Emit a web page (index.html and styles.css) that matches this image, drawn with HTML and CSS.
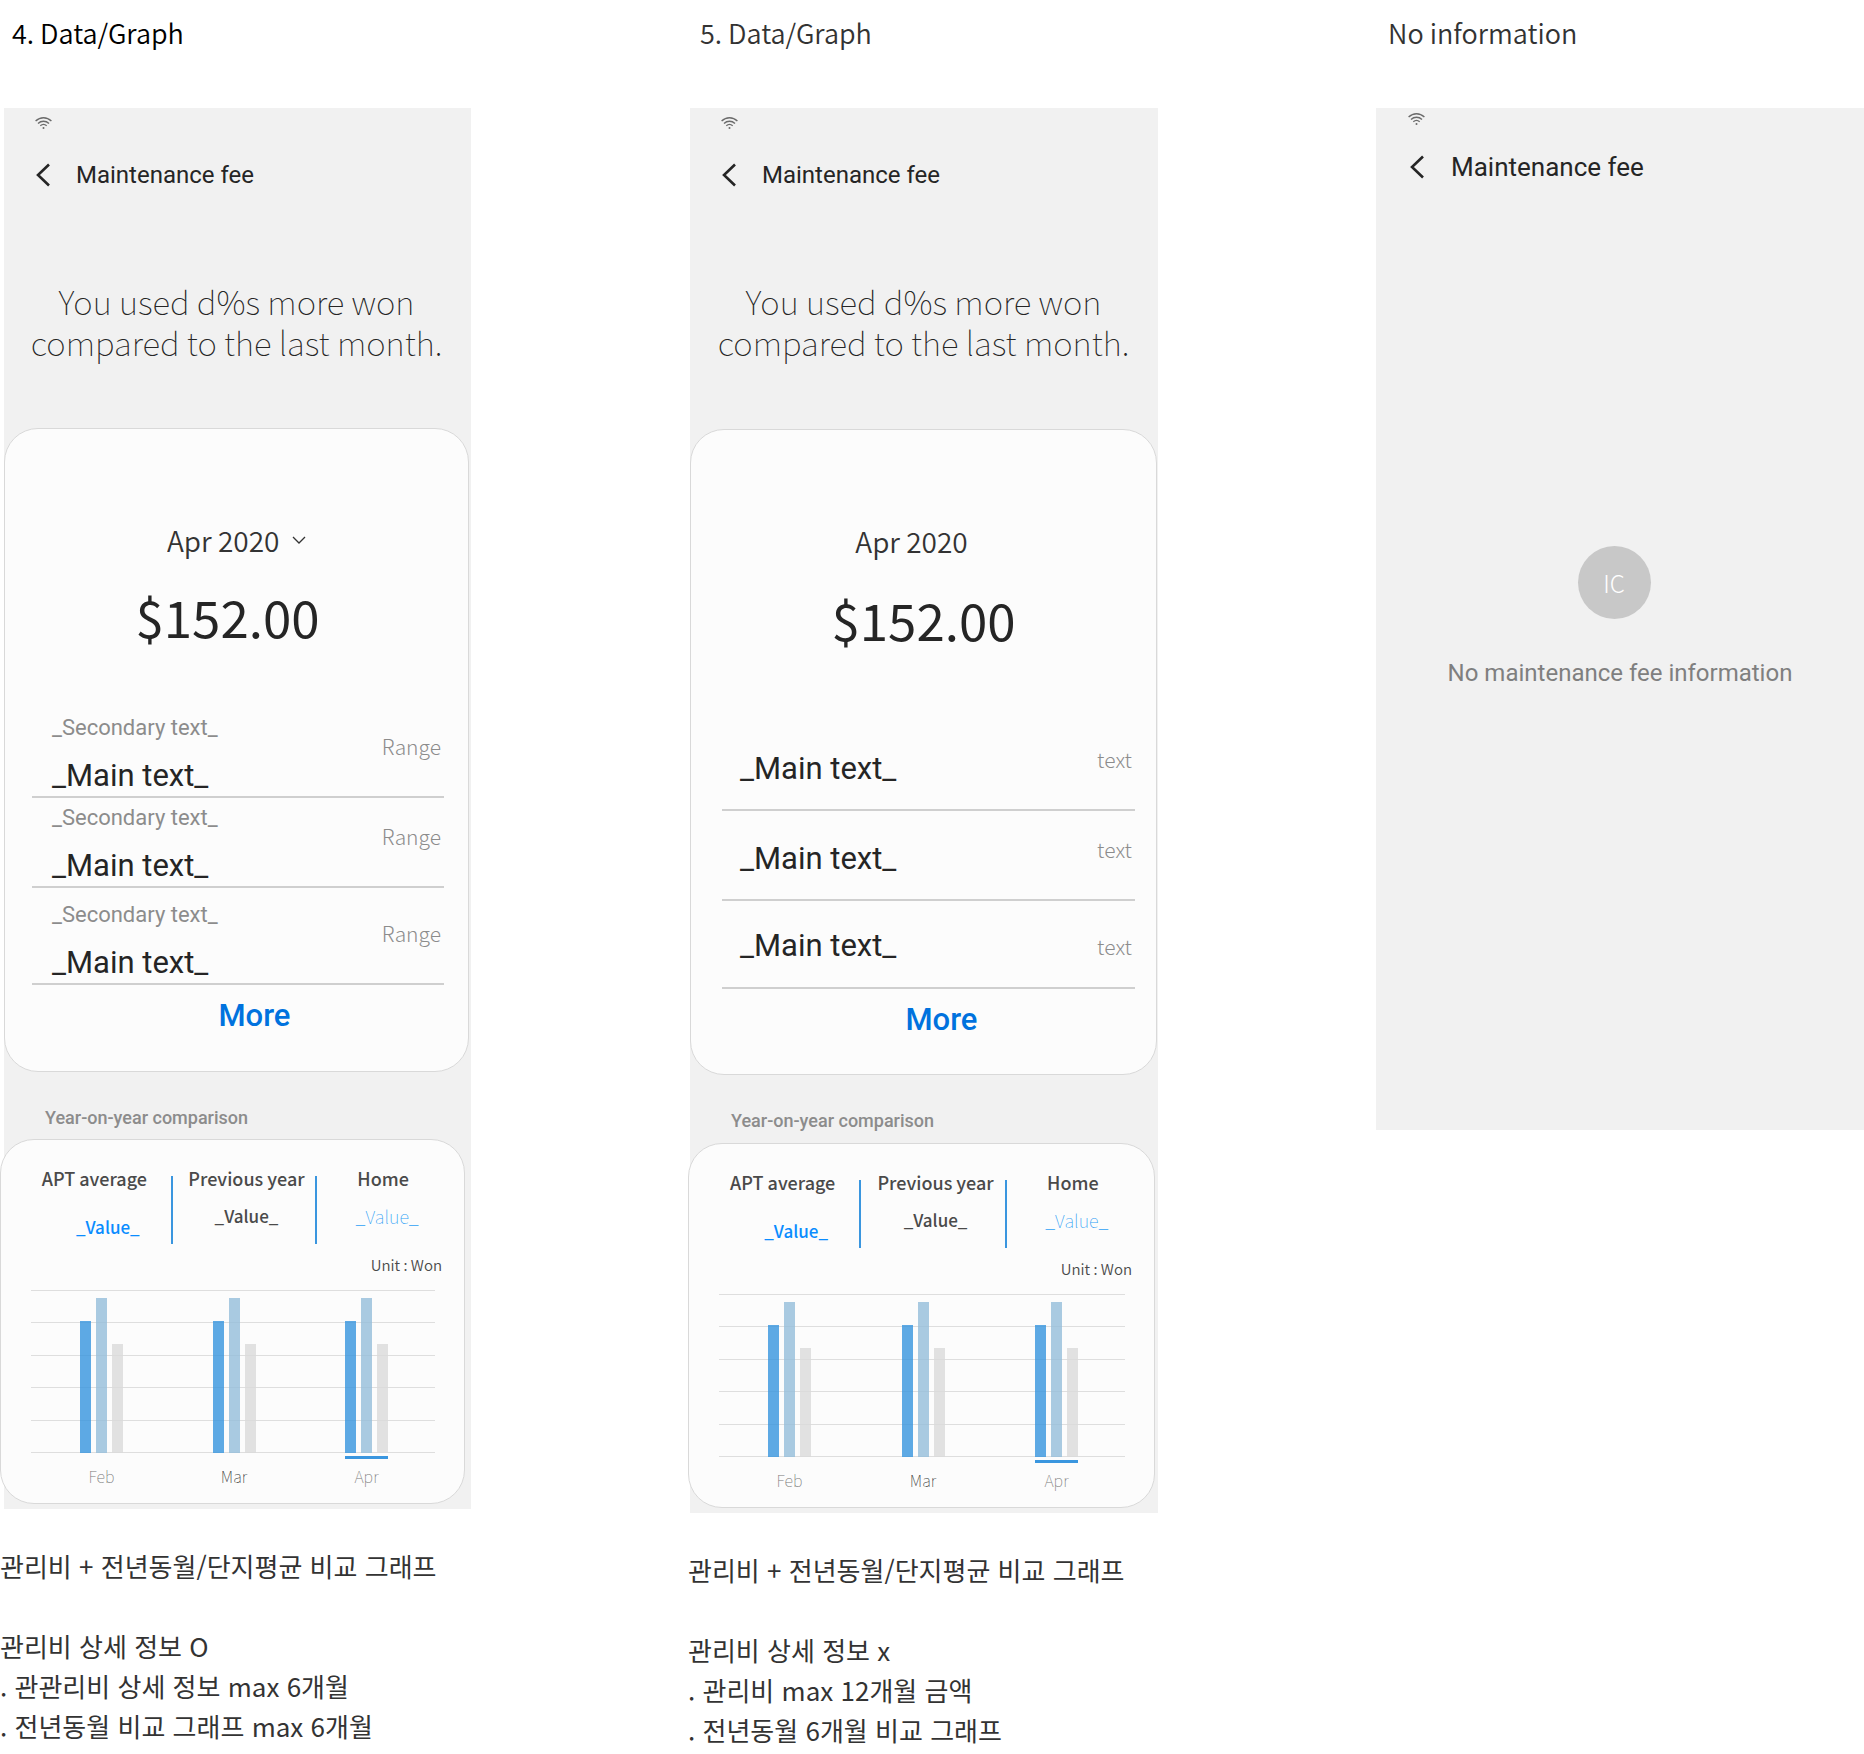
FILE: index.html
```html
<!DOCTYPE html>
<html lang="en">
<head>
<meta charset="utf-8">
<meta name="viewport" content="width=device-width, initial-scale=1">
<title>Maintenance fee screens</title>
<link rel="stylesheet" href="styles.css">
</head>
<body>
<svg class="sprite" aria-hidden="true">
  <symbol id="wifi" viewBox="0 0 17 12">
    <g fill="none" stroke="currentColor" stroke-width="1.4">
      <path d="M.6 4.1C5.2-.4 11.8-.4 16.400 4.100"/>
      <path d="M3 6.400C6.200 3.500 10.800 3.500 14 6.400"/>
      <path d="M5.300 8.700C7.200 7.100 9.800 7.100 11.700 8.700"/>
    </g>
    <circle cx="8.500" cy="10.900" r="1" fill="currentColor"/>
  </symbol>
  <symbol id="back" viewBox="0 0 14 24">
    <path d="M13 1.500 2 12l11 10.500" fill="none" stroke="currentColor" stroke-width="2.600"/>
  </symbol>
  <symbol id="down" viewBox="0 0 14 9">
    <path d="M1 1l6 6 6-6" fill="none" stroke="currentColor" stroke-width="1.300"/>
  </symbol>
</svg>
<main class="board">
  <section class="frame frame-detail">
    <h2 class="frame-title strong">4. Data/Graph</h2>
    <div class="phone">
      <div class="status"><svg class="wifi"><use href="#wifi"/></svg></div>
      <header class="appbar">
        <button class="back" type="button" aria-label="Back"><svg><use href="#back"/></svg></button>
        <h3>Maintenance fee</h3>
      </header>
      <p class="headline">You used d%s more won<br>compared to the last month.</p>
      <div class="card fee">
        <div class="month">
          <select aria-label="Month"><option>Apr 2020</option></select>
          <svg class="down"><use href="#down"/></svg>
        </div>
        <p class="amount">$152.00</p>
        <ul class="rows">
          <li><div><p class="secondary">_Secondary text_</p><p class="primary">_Main text_</p></div><span class="value">Range</span></li>
          <li><div><p class="secondary">_Secondary text_</p><p class="primary">_Main text_</p></div><span class="value">Range</span></li>
          <li><div><p class="secondary">_Secondary text_</p><p class="primary">_Main text_</p></div><span class="value">Range</span></li>
        </ul>
        <button class="more" type="button">More</button>
      </div>
      <h4 class="caption">Year-on-year comparison</h4>
      <div class="card compare">
        <dl class="stats">
          <div class="stat average"><dt>APT average</dt><dd>_Value_</dd></div>
          <div class="stat previous"><dt>Previous year</dt><dd>_Value_</dd></div>
          <div class="stat home"><dt>Home</dt><dd>_Value_</dd></div>
        </dl>
        <p class="unit">Unit : Won</p>
        <div class="chart">
          <div class="lines"><i></i><i></i><i></i><i></i><i></i><i></i></div>
          <div class="groups">
            <div class="bars"><b style="height:81%"></b><b style="height:95%"></b><b style="height:67%"></b></div>
            <div class="bars"><b style="height:81%"></b><b style="height:95%"></b><b style="height:67%"></b></div>
            <div class="bars"><b style="height:81%"></b><b style="height:95%"></b><b style="height:67%"></b></div>
          </div>
        </div>
        <div class="months"><span>Feb</span><span class="mid">Mar</span><span class="current">Apr</span></div>
      </div>
    </div>
    <div class="notes" lang="ko">
      <p>관리비 + 전년동월/단지평균 비교 그래프</p>
      <p class="group">관리비 상세 정보 O</p>
      <p>. 관관리비 상세 정보 max 6개월</p>
      <p>. 전년동월 비교 그래프 max 6개월</p>
    </div>
  </section>

  <section class="frame frame-simple">
    <h2 class="frame-title">5. Data/Graph</h2>
    <div class="phone">
      <div class="status"><svg class="wifi"><use href="#wifi"/></svg></div>
      <header class="appbar">
        <button class="back" type="button" aria-label="Back"><svg><use href="#back"/></svg></button>
        <h3>Maintenance fee</h3>
      </header>
      <p class="headline">You used d%s more won<br>compared to the last month.</p>
      <div class="card fee">
        <p class="month">Apr 2020</p>
        <p class="amount">$152.00</p>
        <ul class="rows">
          <li><p class="primary">_Main text_</p><span class="value">text</span></li>
          <li><p class="primary">_Main text_</p><span class="value">text</span></li>
          <li><p class="primary">_Main text_</p><span class="value">text</span></li>
        </ul>
        <button class="more" type="button">More</button>
      </div>
      <h4 class="caption">Year-on-year comparison</h4>
      <div class="card compare">
        <dl class="stats">
          <div class="stat average"><dt>APT average</dt><dd>_Value_</dd></div>
          <div class="stat previous"><dt>Previous year</dt><dd>_Value_</dd></div>
          <div class="stat home"><dt>Home</dt><dd>_Value_</dd></div>
        </dl>
        <p class="unit">Unit : Won</p>
        <div class="chart">
          <div class="lines"><i></i><i></i><i></i><i></i><i></i><i></i></div>
          <div class="groups">
            <div class="bars"><b style="height:81%"></b><b style="height:95%"></b><b style="height:67%"></b></div>
            <div class="bars"><b style="height:81%"></b><b style="height:95%"></b><b style="height:67%"></b></div>
            <div class="bars"><b style="height:81%"></b><b style="height:95%"></b><b style="height:67%"></b></div>
          </div>
        </div>
        <div class="months"><span>Feb</span><span class="mid">Mar</span><span class="current">Apr</span></div>
      </div>
    </div>
    <div class="notes" lang="ko">
      <p>관리비 + 전년동월/단지평균 비교 그래프</p>
      <p class="group">관리비 상세 정보 x</p>
      <p>. 관리비 max 12개월 금액</p>
      <p>. 전년동월 6개월 비교 그래프</p>
    </div>
  </section>

  <section class="frame frame-empty">
    <h2 class="frame-title">No information</h2>
    <div class="phone">
      <div class="status"><svg class="wifi"><use href="#wifi"/></svg></div>
      <header class="appbar">
        <button class="back" type="button" aria-label="Back"><svg><use href="#back"/></svg></button>
        <h3>Maintenance fee</h3>
      </header>
      <div class="empty">
        <div class="badge-row"><span class="badge">IC</span></div>
        <p>No maintenance fee information</p>
      </div>
    </div>
  </section>
</main>
</body>
</html>
```
FILE: styles.css
```css
:root {
  --sans: "Noto Sans CJK KR", "Noto Sans", sans-serif;
  --ui: Roboto, "Noto Sans CJK KR", sans-serif;
}

* { box-sizing: border-box; }

body, h2, h3, h4, p, ul, dl, dd { margin: 0; padding: 0; }

body {
  background: #fff;
  color: #252525;
  font-family: var(--sans);
  overflow-x: hidden;
}

button, select {
  appearance: none;
  border: 0;
  padding: 0;
  background: none;
  color: inherit;
  font: inherit;
  cursor: pointer;
}

.sprite { display: none; }

.board {
  display: grid;
  grid-template-columns: minmax(0, 688fr) minmax(0, 688fr) minmax(0, 488fr);
  align-items: start;
}

.frame-title {
  padding: 13px 12px 55px;
  font-size: 27px;
  font-weight: 350;
  line-height: 40px;
  color: #333;
}
.frame-title.strong { color: #000; }

.phone {
  max-width: 468px;
  padding-bottom: 5px;
  background: #f1f1f1;
}
.frame-detail .phone { max-width: 467px; margin-left: 4px; padding-right: 2px; }
.frame-simple .phone { margin-left: 2px; padding-right: 1px; }

.status { padding: 9px 31px 0; }
.wifi { display: block; width: 17px; height: 12px; color: #6b6b6b; }

.appbar {
  display: flex;
  align-items: center;
  gap: 26px;
  margin-top: 30px;
  padding-left: 32px;
  font-family: var(--ui);
}
.appbar h3 { font-size: 24px; font-weight: 400; line-height: 32px; }
.back, .back svg { display: block; width: 14px; height: 24px; }
.back svg { overflow: visible; }

.headline {
  margin: 90px 0 66px;
  font-size: 33px;
  font-weight: 100;
  line-height: 41px;
  text-align: center;
}
.frame-detail .headline { margin-bottom: 65px; }

.card {
  border: 1px solid #d9d9d9;
  border-radius: 34px;
  background: #fcfcfc;
}

.fee { padding: 91px 0 37px; }
.frame-simple .fee { padding-bottom: 36px; }

.month {
  display: flex;
  justify-content: center;
  align-items: center;
  gap: 12px;
  font-size: 28px;
  font-weight: 350;
  line-height: 40px;
  color: #333;
}
.month select { height: 40px; }
.down { width: 14px; height: 9px; }
.frame-simple .month { padding-right: 24px; }

.amount {
  margin-top: 26px;
  font-size: 51px;
  line-height: 60px;
  text-align: center;
}
.frame-detail .amount { padding-right: 18px; }
.frame-simple .amount { margin-top: 28px; }

.rows { margin: 62px 24px 0 27px; list-style: none; }
.rows li {
  display: flex;
  justify-content: space-between;
  padding: 7px 3px 2px 20px;
  border-bottom: 2px solid #cfcfcf;
}
.rows li:last-child { padding-top: 14px; }
.secondary {
  margin-bottom: 17px;
  font: 22px/26px var(--ui);
  color: #8c8c8c;
}
.primary { font: 31px/36px var(--ui); }
.value {
  margin-top: 18px;
  font-size: 21px;
  font-weight: 300;
  line-height: 26px;
  color: #8c8c8c;
}

.frame-simple .rows { margin: 72px 21px 0 31px; }
.frame-simple .rows li { padding: 24px 3px 22px 18px; }
.frame-simple .rows li:last-child { padding: 27px 3px 23px 18px; }
.frame-simple .primary { margin-top: 6px; }
.frame-simple .value { margin-top: 1px; }
.frame-simple li:last-child .primary { margin-top: 0; }
.frame-simple li:last-child .value { margin-top: 5px; }

.more {
  display: block;
  width: 100%;
  margin-top: 13px;
  padding-left: 36px;
  font: 500 31px/36px var(--ui);
  color: #0072de;
  text-align: center;
}

.caption {
  margin: 34px 41px 9px;
  font: 500 18px/24px var(--ui);
  color: #8c8c8c;
}
.frame-simple .caption { margin-bottom: 10px; }

.compare { padding: 26px 0 17px; }
.frame-detail .compare { margin-left: -4px; margin-right: 4px; }
.frame-simple .compare { margin-left: -2px; margin-right: 2px; }

.stats {
  display: grid;
  grid-template-columns: 172fr 145fr 147fr;
  font-size: 18px;
  font-weight: 500;
  line-height: 24px;
  color: #4a4a4a;
  text-align: center;
}
.stat {
  display: grid;
  grid-template-columns: 1fr 2px;
  grid-template-rows: 24px 1fr;
  row-gap: 14px;
}
.stat::after {
  content: "";
  grid-area: 1 / 2 / 3 / 3;
  height: 68px;
  margin-top: 10px;
  background: #3a96df;
}
.stat dt, .stat dd { grid-column: 1; }
.home::after { display: none; }
.average dt { padding-left: 17px; }
.average dd { padding: 11px 0 0 44px; color: #0a8cff; font-size: 17px; }
.previous dt, .previous dd { padding-left: 5px; }
.previous dd { font-size: 17px; }
.home dt { padding-right: 13px; }
.home dd { padding-right: 5px; color: #2f9ff5; font-weight: 100; }

.unit {
  margin: 11px 22px 15px;
  font-size: 15px;
  font-weight: 350;
  line-height: 20px;
  color: #4a4a4a;
  text-align: right;
}

.chart { display: grid; height: 163px; margin: 0 29px 0 30px; }
.lines, .groups { grid-area: 1 / 1; display: flex; justify-content: space-between; }
.lines { flex-direction: column; }
.lines i { height: 1px; background: #dedede; }
.groups { padding: 0 47px 0 49px; }
.bars { display: flex; align-items: flex-end; gap: 5px; }
.bars b { width: 11px; background: rgba(53, 148, 221, .8); }
.bars b:nth-child(2) { background: rgba(148, 189, 218, .8); }
.bars b:nth-child(3) { background: rgba(218, 218, 218, .8); }

.months {
  display: flex;
  justify-content: space-between;
  margin: 3px 76px 0 79px;
  font-size: 16px;
  font-weight: 100;
  line-height: 20px;
  color: #777;
  text-align: center;
}
.months span { width: 43px; padding-top: 7px; border-top: 3px solid transparent; }
.months .mid { color: #333; }
.months .current { border-color: #3a96df; }

.notes {
  margin-top: 37px;
  font-size: 26px;
  line-height: 40px;
  color: #333;
}
.notes .group { margin-top: 40px; }

.frame-empty .phone { max-width: none; min-height: 1022px; }
.frame-empty .status { padding: 5px 32px 0; }
.frame-empty .appbar { gap: 27px; margin-top: 26px; padding-left: 34px; }
.frame-empty h3 { font-size: 26px; }
.empty { margin-top: 363px; text-align: center; font: 24px/32px var(--ui); color: #7f7f7f; }
.badge-row { display: flex; justify-content: center; margin-bottom: 38px; padding-right: 12px; }
.badge {
  display: grid;
  place-items: center;
  width: 73px;
  height: 73px;
  border-radius: 50%;
  background: #c8c8c8;
  color: #fff;
  font: 300 24px/32px var(--sans);
}
```
